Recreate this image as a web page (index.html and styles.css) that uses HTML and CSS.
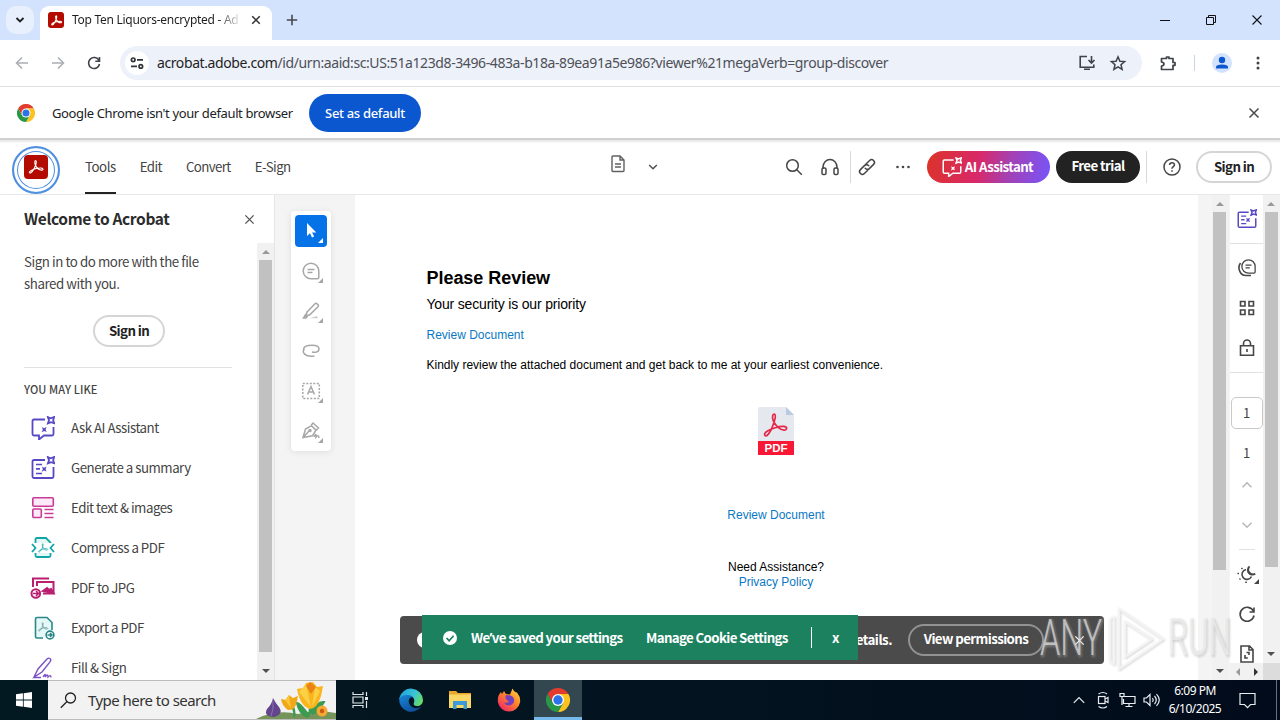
FILE: index.html
```html
<!DOCTYPE html>
<html lang="en">
<head>
<meta charset="utf-8">
<title>Top Ten Liquors-encrypted - Adobe Acrobat</title>
<link rel="stylesheet" href="styles.css">
</head>
<body>
<svg class="defs" aria-hidden="true">
  <symbol id="trefoil" viewBox="0 0 24 24"><path d="M3.500 19.800c1.800 1.200 4.800-3 6.700-7.200 1.800-4.100 2.900-8.400 1.600-9-1.600-.7-1.900 3.200-.3 6.500 1.700 3.500 5 6.100 7.900 6.100 3 0 2.600-2.900-1.300-2.900-4 0-8.600 1.200-11.900 2.900-2.900 1.500-3.600 3-2.700 3.600z" fill="none" stroke="currentColor" stroke-linejoin="round"/></symbol>
  <symbol id="x" viewBox="0 0 12 12"><path d="M1.500 1.500l9 9M10.500 1.500l-9 9" stroke="currentColor" fill="none"/></symbol>
  <symbol id="chrome" viewBox="0 0 24 24"><path fill="#e33b2e" d="M1.600 6A12 12 0 0 1 22.400 6H12L6.800 15z"/><path fill="#fcc31e" d="M22.400 6A12 12 0 0 1 12 24l5.200-9L12 6z"/><path fill="#279847" d="M12 24A12 12 0 0 1 1.600 6l5.200 9h10.400z"/><circle cx="12" cy="12" r="6" fill="#fff"/><circle cx="12" cy="12" r="4.700" fill="#2d73e8"/></symbol>
  <symbol id="spark" viewBox="0 0 8 8"><path d="M1.200 1l2.300 1L6.800 .9 5.900 3.700l1 2.800-2.900-1-2.800 1.100 1-2.800z" fill="none" stroke="currentColor" stroke-width="1.600"/></symbol>
  <symbol id="ai" viewBox="0 0 24 24"><path class="tint" d="M14 3.500H3Q1.500 3.500 1.500 5v13Q1.500 19.500 3 19.500H8v4l5-4h8q1.500 0 1.500-1.500V11" stroke="currentColor" stroke-width="1.800"/><path d="M11 11l2 1.200 2.600-1.200-1 2.500 1 2.500-2.400-.9-2.600 1.100 1.200-2.500z" fill="currentColor"/><use href="#spark" x="15.500" y="0" width="9" height="9"/></symbol>
  <symbol id="summary" viewBox="0 0 24 24"><path class="tint" d="M14 4H3Q1.500 4 1.500 5.500v15Q1.500 22 3 22H21q1.500 0 1.500-1.500V11" stroke="currentColor" stroke-width="1.800"/><path d="M5 8.500h6M5 12.800h4M5 17.500h6" stroke="currentColor" stroke-width="1.700"/><path d="M11 10.500l2 1.200 2.600-1.200-1 2.500 1 2.500-2.400-.9-2.600 1.100 1.200-2.500z" fill="currentColor"/><use href="#spark" x="15.500" y="0" width="9" height="9"/></symbol>
  <symbol id="comment" viewBox="0 0 20 20"><path d="M10 2.200a7.800 7.800 0 1 0 0 15.600h6.500q1.300 0 1.300-1.300V10A7.800 7.800 0 0 0 10 2.200zM6.500 8.500h7M6.500 11.500h5" fill="none" stroke="currentColor" stroke-width="1.500"/></symbol>
</svg>

<div class="tabstrip">
  <div class="tab-search"><svg width="12" height="8" viewBox="0 0 12 8"><path d="M2.500 2L6 5.500 9.500 2" fill="none" stroke="#202124" stroke-width="1.900"/></svg></div>
  <div class="tab">
    <span class="favicon"><svg width="13" height="13" stroke-width="2"><use href="#trefoil"/></svg></span>
    <span class="tab-title">Top Ten Liquors-encrypted - Ad</span>
    <svg class="tab-close" width="10" height="10" stroke-width="1.900"><use href="#x"/></svg>
  </div>
  <svg class="new-tab" width="12" height="12" viewBox="0 0 12 12"><path d="M6 .8v10.400M.8 6h10.400" stroke="#45494d" stroke-width="1.600"/></svg>
  <div class="window-controls">
    <svg width="12" height="12" viewBox="0 0 12 12"><path d="M1 6.500h10" stroke="#111"/></svg>
    <svg width="12" height="12" viewBox="0 0 12 12"><path d="M1.500 3.500h7v7h-7zM3.500 3V1.500h7v7H9" fill="none" stroke="#111"/></svg>
    <svg width="12" height="12" viewBox="0 0 12 12" stroke-width="1.100"><use href="#x"/></svg>
  </div>
</div>

<div class="toolbar">
  <svg class="nav dim" width="14" height="14" viewBox="0 0 14 14"><path d="M13 7H2M7 1.500L1.500 7 7 12.500"/></svg>
  <svg class="nav dim" width="14" height="14" viewBox="0 0 14 14"><path d="M1 7h11M7 1.500L12.500 7 7 12.500"/></svg>
  <svg class="nav" width="14" height="14" viewBox="0 0 14 14"><path d="M12 4.500A5.500 5.500 0 1 0 12.500 8M12.500 1v4.200H8.300"/></svg>
  <div class="omnibox">
    <span class="site-info"><svg width="14" height="14" viewBox="0 0 14 14" fill="none" stroke="#303338" stroke-width="1.700"><circle cx="3.200" cy="3.800" r="1.800"/><path d="M7 3.800h6M1 10.400h6"/><circle cx="10.800" cy="10.400" r="1.800"/></svg></span>
    <span class="url"><b>acrobat.adobe.com</b>/id/urn:aaid:sc:US:51a123d8-3496-483a-b18a-89ea91a5e986?viewer%21megaVerb=group-discover</span>
    <svg width="18" height="16" viewBox="0 0 18 16" fill="none" stroke="#3f4349" stroke-width="1.600"><path d="M9 1.500H2.200v10.700h13.600V9.500M6 14.200h6M13.500 1v6.500M10.500 5l3 3 3-3"/></svg>
    <svg width="16" height="16" viewBox="0 0 16 16" fill="none" stroke="#3f4349" stroke-width="1.500"><path d="M8 1.800l1.900 4.400 4.700.4-3.600 3.100 1.100 4.700L8 11.900l-4.100 2.500L5 9.700 1.400 6.600l4.700-.4z"/></svg>
  </div>
  <svg class="ext" width="18" height="18" viewBox="0 0 18 18"><path d="M2.500 4.500h5V3h2.500v1.500h4v4H16v2.800h-2v4.200H2.500V12q2.500-.5 2.500-2T2.500 8z" fill="none" stroke="#3f4349" stroke-width="1.700" stroke-linejoin="round"/></svg>
  <i class="sep"></i>
  <svg class="avatar" width="20" height="20" viewBox="0 0 20 20"><circle cx="10" cy="10" r="10" fill="#d3e3fd"/><circle cx="10" cy="7" r="3.200" fill="#0b57d0"/><path d="M4 15.500v-1.300Q4 11.600 10 11.600t6 2.600v1.300z" fill="#0b57d0"/></svg>
  <svg width="4" height="16" viewBox="0 0 4 16" fill="#3f4349"><circle cx="2" cy="3" r="1.500"/><circle cx="2" cy="8" r="1.500"/><circle cx="2" cy="13" r="1.500"/></svg>
</div>

<div class="infobar">
  <svg width="18" height="18"><use href="#chrome"/></svg>
  <span class="info-text">Google Chrome isn't your default browser</span>
  <span class="set-default">Set as default</span>
  <svg class="info-close" width="12" height="12" stroke-width="1.500"><use href="#x"/></svg>
</div>

<header class="app-header">
  <span class="logo"><span class="logo-tile"><svg width="18" height="18" stroke-width="1.500"><use href="#trefoil"/></svg></span></span>
  <nav class="menu"><span class="active">Tools</span><span>Edit</span><span>Convert</span><span>E-Sign</span></nav>
  <div class="doc-switch">
    <svg width="16" height="20" viewBox="0 0 16 20" fill="none" stroke="#606060" stroke-width="1.400"><path d="M3 2h7l4 4v10.500q0 1-1 1H3q-1 0-1-1V3q0-1 1-1zM10 2v4h4M5 10h6M5 13h6"/></svg>
    <svg width="10" height="10" viewBox="0 0 10 10" fill="none" stroke="#505050" stroke-width="1.500"><path d="M1.200 3L5 6.800 8.800 3"/></svg>
  </div>
  <div class="actions">
    <svg width="18" height="18" viewBox="0 0 18 18"><circle cx="7.500" cy="7.500" r="5.800"/><path d="M11.800 11.800l5 5"/></svg>
    <svg width="20" height="18" viewBox="0 0 20 18"><path d="M3 11V9a7 7.500 0 0 1 14 0v2"/><rect x="2" y="10" width="4" height="6.500" rx="1.300"/><rect x="14" y="10" width="4" height="6.500" rx="1.300"/></svg>
    <i class="sep tall"></i>
    <svg width="18" height="18" viewBox="0 0 18 18"><g transform="rotate(-45 9 9)"><path d="M8 11.800H2.500a2.800 2.800 0 0 1 0-5.600h6A2.800 2.800 0 0 1 11 10M10 6.200h5.500a2.800 2.800 0 0 1 0 5.600h-6A2.800 2.800 0 0 1 7 8"/></g></svg>
    <svg class="dots" width="16" height="4" viewBox="0 0 16 4"><circle cx="2.500" cy="2" r="1.300"/><circle cx="8" cy="2" r="1.300"/><circle cx="13.500" cy="2" r="1.300"/></svg>
    <span class="pill ai"><svg class="icon" width="20" height="20"><use href="#ai"/></svg>AI Assistant</span>
    <span class="pill dark">Free trial</span>
    <i class="sep tall"></i>
    <svg width="20" height="20" viewBox="0 0 20 20"><circle cx="10" cy="10" r="8"/><path d="M7.500 8q.2-2.300 2.500-2.300T12.500 7.800c0 1.800-2.500 1.900-2.500 4M10 13.300v1.500"/></svg>
    <span class="pill outline">Sign in</span>
  </div>
</header>

<main class="main">
  <aside class="panel">
    <div class="panel-head"><h1>Welcome to Acrobat</h1><svg width="11" height="11" stroke-width="1.500"><use href="#x"/></svg></div>
    <div class="panel-body">
      <div class="panel-content">
        <p>Sign in to do more with the file shared with you.</p>
        <span class="pill outline panel-sign">Sign in</span>
        <hr>
        <h2>YOU MAY LIKE</h2>
        <ul>
          <li><svg class="icon violet inset" width="24" height="24"><use href="#ai"/></svg>Ask AI Assistant</li>
          <li><svg class="icon violet inset" width="24" height="24"><use href="#summary"/></svg>Generate a summary</li>
          <li><svg width="26" height="26" viewBox="0 0 26 26" fill="#fdeaf8" stroke="#c93b97" stroke-width="1.600"><rect x="2.800" y="2.800" width="20.500" height="8.400" rx="1"/><rect x="2.800" y="14" width="8.500" height="8.500" rx="1"/><path d="M14.500 14.500H23.500M14.500 18.500H23.500M14.500 22.500H23.500"/></svg>Edit text &amp; images</li>
          <li><svg class="teal" width="26" height="26" viewBox="0 0 26 26" fill="#e4f8f8" stroke="#11a6a6" stroke-width="1.800"><path d="M5.500 8V4.500q0-1.500 1.500-1.500h9l4.500 4.500V8M5.500 18v2.500Q5.500 22 7 22h12q1.500 0 1.500-1.500V18"/><path d="M2 9l3.500 4L2 17M24 9l-3.500 4 3.500 4" fill="none"/><use href="#trefoil" x="7" y="7" width="12" height="12"/></svg>Compress a PDF</li>
          <li><svg width="26" height="26" viewBox="0 0 26 26" fill="none" stroke="#b91e71" stroke-width="2"><path d="M3 12V3.500h16M7 11V7h16.500v11.500H13"/><path d="M13 16l4-3 2 2 2-1 2.500 4z" fill="#b91e71"/><circle cx="5.800" cy="18.500" r="4.300" fill="#fff"/><path d="M3 18.500h5M6 16l2.500 2.500L6 21" stroke-width="1.600"/></svg>PDF to JPG</li>
          <li><svg class="slate" width="26" height="26" viewBox="0 0 26 26" fill="#e4f8f8" stroke="#2b8889" stroke-width="1.600"><path d="M13 23H7q-1.500 0-1.500-1.500V4Q5.500 2.500 7 2.500h10l5 5V15"/><use href="#trefoil" x="7" y="6" width="12" height="12"/><circle cx="20" cy="20" r="3.900" fill="#fff"/><path d="M17.500 20h4.500M20 18l2 2-2 2"/></svg>Export a PDF</li>
          <li><svg width="26" height="26" viewBox="0 0 26 26" fill="none" stroke="#7a52c7" stroke-width="1.400"><path d="M4 22L8 14 17 4q1.500-1.500 3-.5t0 3.400L12 17l-8 5zM4 22.500h7M13 22q3-5 2 0 3-4 3 0 3-3 3 .5"/></svg>Fill &amp; Sign</li>
        </ul>
      </div>
      <div class="scrollbar panel-sb"><i class="up"></i><b></b><i class="down"></i></div>
    </div>
  </aside>

  <section class="canvas">
    <div class="tools">
      <span class="tool on"><svg width="20" height="20" viewBox="0 0 20 20"><path d="M6 2v13l3-2.700 2 4.200 2.100-1-2-4.100h4.200z" fill="#fff"/></svg></span>
      <span class="tool"><svg width="20" height="20"><use href="#comment"/></svg></span>
      <span class="tool"><svg width="20" height="20" viewBox="0 0 20 20"><path d="M6 11L14 2.800q1-.9 2 0l1 1q1 1 0 2L8.500 14 5 15zM5 13l-2.500 4H5l1.500-2"/><path d="M9 17.200h8L16 15z" fill="#ccc" stroke="none"/></svg></span>
      <span class="tool plain"><svg width="20" height="20" viewBox="0 0 20 20"><path d="M3 9.500C1.500 5.500 6 4.200 11 4.200s7.500 1.500 7 4.300-4.500 3.300-7 2.500M3.500 7.500C.5 11 3.500 16.500 13.500 15"/></svg></span>
      <span class="tool"><svg width="20" height="20" viewBox="0 0 20 20"><rect x="1.800" y="2.500" width="16.500" height="15" stroke-dasharray="2 1.500"/><path d="M6.500 13.500L10 5.500l3.500 8M7.800 11h4.500"/></svg></span>
      <span class="tool"><svg width="20" height="20" viewBox="0 0 20 20"><path d="M2 16.500L4.500 8l6-3.300 4.500 4.500-3.500 5.500zM2.500 16l5.500-6M10 4.500L12 2l5.500 5-2.300 2.300M13 16q2.500-5 2 0 2.500-3 3 1"/><circle cx="9" cy="9.500" r="1"/></svg></span>
    </div>
    <article class="page">
      <h3>Please Review</h3>
      <p class="lead">Your security is our priority</p>
      <p class="link first">Review Document</p>
      <p class="body">Kindly review the attached document and get back to me at your earliest convenience.</p>
      <div class="centered">
        <div class="pdf-file">
          <svg width="36" height="34" viewBox="0 0 36 34"><path d="M0 1.500Q0 0 1.500 0H28l8 8v26H0z" fill="#e5e9ef"/><path d="M28 0l8 8h-8z" fill="#b9cbe2"/><g color="#e52748" fill="none" stroke="currentColor" stroke-width="1.700"><path d="M7 28.500c2 1.500 5.500-3.500 7.500-9s4-10.500 2.500-12-3.800 1.700-1.600 6.700 7.600 9 10.600 9 4.100-3.300-.4-3.800S13 22 9.500 24 6.300 27.800 7 28.500z"/></g></svg>
          <span>PDF</span>
        </div>
        <p class="link">Review Document</p>
        <p class="need">Need Assistance?</p>
        <p class="link">Privacy Policy</p>
      </div>
    </article>
    <div class="scrollbar doc-sb"><i class="up"></i><b></b><i class="down"></i></div>
  </section>

  <div class="rail-wrap">
    <aside class="rail">
      <svg class="icon violet" width="20" height="20"><use href="#summary"/></svg>
      <hr>
      <svg width="20" height="20" viewBox="0 0 20 20"><g transform="translate(3 0) scale(.85)"><use href="#comment" width="20" height="20"/></g><path d="M3.500 5C0 10 3 17.500 9 17.500h5"/></svg>
      <svg width="20" height="20" viewBox="0 0 20 20"><path d="M3.500 3.500h4.500v4.500h-4.500zM12 3.500h4.500v4.500H12zM3.500 12h4.500v4.500h-4.500zM12 12h4.500v4.500H12z"/></svg>
      <svg class="lock" width="20" height="20" viewBox="0 0 20 20"><path d="M3.500 7.700h13v9.500h-13zM6.500 7.500V5.500a3.500 3.500 0 0 1 7 0v2M10 11v3"/></svg>
      <hr>
      <span class="page-box">1</span>
      <span class="page-total">1</span>
      <svg class="faint" width="12" height="12" viewBox="0 0 12 12"><path d="M1.500 8.200L6 3.800l4.500 4.400"/></svg>
      <svg class="faint" width="12" height="12" viewBox="0 0 12 12"><path d="M1.500 3.800L6 8.200l4.500-4.400"/></svg>
      <hr class="short">
      <svg width="20" height="20" viewBox="0 0 20 20"><path d="M9 5.500a5 5 0 1 0 5.500 7M12.500 2.500c-3 4 .5 9 5.700 7.300A4.500 4.500 0 0 1 12.500 2.500z"/><path d="M4.500 4l.9 1M.5 9.500h1.500M2.500 15.500l1-.9M9 19v-1.500"/><path d="M22 15v5h-5z" fill="#464646" stroke="none"/></svg>
      <svg width="20" height="20" viewBox="0 0 20 20"><path d="M16.300 7A7 7 0 1 0 17 11.500M17 3.500v4.500h-4.500"/></svg>
      <svg width="20" height="20" viewBox="0 0 20 20"><path d="M4 2h8.500L16 5.500V18H4zM12 2v4h4M9.500 8.500H12V11M8 11v3h2.800"/></svg>
    </aside>
    <div class="hscroll"><i></i><i></i></div>
  </div>
  <div class="outer-sb"><div class="scrollbar"><i class="up"></i><b></b><i class="down"></i></div></div>

  <div class="notice">
    <span class="ball"></span>
    <span class="notice-text">etails.</span>
    <span class="pill view">View permissions</span>
    <svg width="11" height="11" stroke-width="1.400"><use href="#x"/></svg>
  </div>
  <div class="cookie">
    <svg width="14" height="14" viewBox="0 0 14 14"><circle cx="7" cy="7" r="7" fill="#fff"/><path d="M3.500 7l2.600 2.700 4.500-5" fill="none" stroke="#1c815f" stroke-width="1.700"/></svg>
    <span class="saved">We<span class="apos">’</span>ve saved your settings</span>
    <span class="manage">Manage Cookie Settings</span>
    <i></i>
    <span class="dismiss">x</span>
  </div>
  <svg class="watermark" width="200" height="70" viewBox="0 0 200 70">
    <g class="wm-shadow"><text x="3" y="49" textLength="62" lengthAdjust="spacingAndGlyphs">ANY</text><text x="131" y="49" textLength="63" lengthAdjust="spacingAndGlyphs">RUN</text><path d="M73 13v42l4 3V11z M82 3v60l44-30z M88 16v35l27-18z"/></g>
    <g class="wm-face"><text x="2" y="48" textLength="62" lengthAdjust="spacingAndGlyphs">ANY</text><text x="130" y="48" textLength="63" lengthAdjust="spacingAndGlyphs">RUN</text><path d="M72 12v42l4 3V10z M81 2v60l44-30z M87 15v35l27-18z"/></g>
  </svg>
</main>

<footer class="taskbar">
  <div class="start"><svg width="16" height="16" viewBox="0 0 16 16" fill="#fff"><path d="M0 2.300L6.900 1.300V7.600H0zM7.700 1.200L16 0v7.600H7.700zM0 8.400h6.900v6.300L0 13.700zM7.700 8.400H16V16l-8.300-1.200z"/></svg></div>
  <div class="search">
    <svg width="17" height="17" viewBox="0 0 17 17" fill="none" stroke="#222" stroke-width="1.300"><circle cx="10.500" cy="6" r="5"/><path d="M7 9.500L.8 15.800"/></svg>
    <span>Type here to search</span>
    <svg class="flowers" width="80" height="38" viewBox="0 0 80 38">
      <path d="M0 38Q20 28 42 33q18-5 38-1v6z" fill="#74945a"/>
      <path d="M54 14q4 12-2 22M35 22q5 8 3 14M54 30q9-10 14-9-5 9-12 12M52 33q-9-12-11-11 2 10 10 14" fill="#3a9b51" stroke="#3a9b51" stroke-width="2"/>
      <path d="M17 17q3 6 6 9 5 7-5 10-11-1-7-8 5-5 6-11z" fill="#63458d"/><path d="M17 20q1 8-2 15" stroke="#8e70b2" fill="none"/>
      <path d="M25 18l5 1 3-5 4 3 5-2-1 5q-2 10-9 9-6-4-7-11z" fill="#f0a818"/><path d="M33 14l2 13-6-8z" fill="#fbc73a"/>
      <path d="M41 8l6-1 3-5 7-1 4 5 6-1-2 10q-4 13-11 13-10-3-13-20z" fill="#f8b51d"/><path d="M50 3l5 23-12-15zM59 6l5 4-8 16z" fill="#fbd045"/><path d="M50 5l4-4 6 5-5 7z" fill="#e98217"/>
      <circle cx="66" cy="30" r="5.500" fill="#f7a832"/><circle cx="66" cy="30" r="2.200" fill="#c75b13"/>
    </svg>
  </div>
  <div class="app"><svg width="18" height="18" viewBox="0 0 18 18" fill="none" stroke="#dfe5e8" stroke-width="1.200"><path d="M2 1v2.500h10V1M2 17v-2.500h10V17M2 6h10v6H2zM15.500 1v4M15.500 10v7"/><path d="M14 7.500h3" stroke-width="3"/></svg></div>
  <div class="app edge"><svg width="24" height="24" viewBox="0 0 24 24"><defs><linearGradient id="eg" x1="0" x2="1" y1=".2" y2=".6"><stop stop-color="#1aa2dc"/><stop offset=".6" stop-color="#3cc4d6"/><stop offset="1" stop-color="#68dc63"/></linearGradient><linearGradient id="eb" x2=".6" y2="1"><stop stop-color="#1786d6"/><stop offset="1" stop-color="#0f4f9c"/></linearGradient></defs><path d="M.3 10A12 12 0 0 1 24 12c0 4-3 6-6 6s-4-1.500-3-3.500S15 8 10 8 1 9.500.3 12z" fill="url(#eg)"/><path d="M.2 11C2 6.500 11 6 14 9c-5 0-5 5-3 8 3 4 8 4 11.300 1.200A12 12 0 0 1 .2 11z" fill="url(#eb)"/></svg></div>
  <div class="app"><svg width="22" height="20" viewBox="0 0 22 20"><path d="M0 1h7l2 2h13v15H0z" fill="#e9a82c"/><path d="M0 4.500h22V18H0z" fill="#fbd766"/><path d="M4 11h14v8h-3.500v-4h-7v4H4z" fill="#3d9bd8"/></svg></div>
  <div class="app"><svg width="24" height="24" viewBox="0 0 24 24"><defs><linearGradient id="ff" x1="1" y1="0" x2=".2" y2="1"><stop stop-color="#ffe34a"/><stop offset=".45" stop-color="#ff8a28"/><stop offset="1" stop-color="#f02468"/></linearGradient></defs><path d="M4 4l1 2 2-3 2 3 4 .5L15.500.5q2 4 4.500 4 4 5 3 10a11.200 11.200 0 0 1-22 0Q0 8 4 4z" fill="url(#ff)"/><path d="M9 7q7 0 8 4t-3 6q-5 1.500-7-2.500 3 1 5-1-5-2-3-6.500z" fill="#7340bd"/></svg></div>
  <div class="app current"><svg width="24" height="24"><use href="#chrome"/></svg></div>
  <div class="tray">
    <svg width="12" height="8" viewBox="0 0 12 8"><path d="M.8 6.800L6 1.500l5.200 5.300"/></svg>
    <svg width="12" height="18" viewBox="0 0 12 18"><rect x="1.500" y="5.500" width="6.500" height="7"/><path d="M8 8l3-1.500v5L8 10M1.500 3Q6 0 10 3M1.500 15.500q4.500 3 8.500 0"/></svg>
    <svg width="17" height="16" viewBox="0 0 17 16"><path d="M5 4.500h11v7H4.500V7M10 11.500v3M6.500 14.500h7M1 1.500h4v3H1zM3 4.500v8.500"/></svg>
    <svg width="17" height="16" viewBox="0 0 17 16"><path d="M1 6h2.500L7 2.500v11L3.500 10H1zM9.500 6q1.500 2 0 4M11.500 4q3.500 4 0 8M13.500 2.200q5.500 5.800 0 11.600"/></svg>
    <div class="clock"><span>6:09 PM</span><span>6/10/2025</span></div>
    <svg width="17" height="17" viewBox="0 0 17 17"><path d="M1 1.500h15v11h-4.500L8.500 15.700 5.500 12.500H1z"/></svg>
    <i></i>
  </div>
</footer>
</body>
</html>
```
FILE: styles.css
```css
* { box-sizing: border-box; }
html, body, h1, h2, h3, p, ul { margin: 0; padding: 0; }
body {
  width: 1280px; height: 720px; overflow: hidden;
  display: flex; flex-direction: column;
  background: #fff; color: #2c2c2c; white-space: nowrap;
  font-family: "Noto Sans CJK SC", "Noto Sans", sans-serif;
}
svg { flex: none; display: block; overflow: visible; }
.defs { position: absolute; width: 0; height: 0; }

.tabstrip, .toolbar, .infobar { font-family: "Noto Sans", sans-serif; }
.tabstrip { height: 40px; flex: none; display: flex; align-items: center; background: #d3e3fd; padding-left: 6px; }
.tab-search { width: 28px; height: 28px; border-radius: 10px; background: #e9f0fd; display: grid; place-items: center; }
.tab { align-self: flex-end; width: 232px; height: 34px; margin-left: 6px; padding: 0 10px 6px 8px; background: #fff; border-radius: 9px 9px 0 0; display: flex; align-items: center; }
.favicon { width: 16px; height: 16px; border-radius: 3px; background: #b30b00; color: #fff; display: grid; place-items: center; flex: none; }
.tab-title { flex: none; width: 168px; margin-left: 8px; overflow: hidden; font-size: 12px; line-height: 18px; letter-spacing: -.28px; color: #1f1f1f; -webkit-mask-image: linear-gradient(90deg, #000 145px, transparent 170px); mask-image: linear-gradient(90deg, #000 145px, transparent 170px); }
.tab-close { margin-left: 11px; color: #303236; }
.new-tab { margin-left: 14px; }
.window-controls { margin-left: auto; display: flex; gap: 34px; padding-right: 17px; color: #111; }

.toolbar { height: 47px; flex: none; display: flex; align-items: center; padding: 0 20px 1px 15px; border-bottom: 1px solid #dfe1e5; background: #fff; }
.nav { margin-right: 22px; fill: none; stroke: #3f4349; stroke-width: 1.600px; }
.nav.dim { stroke: #acafb4; }
.omnibox { width: 1022px; height: 34px; margin-left: -3px; border-radius: 17px; background: #edf1fa; display: flex; align-items: center; padding: 0 16px 0 5px; gap: 14px; }
.site-info { width: 24px; height: 24px; border-radius: 12px; background: #fff; display: grid; place-items: center; }
.url { flex: 1; margin-left: -6px; font-size: 14px; letter-spacing: -.402px; color: #4d5056; }
.url b { font-weight: 400; color: #1f1f1f; }
.ext { margin-left: 17px; }
.sep { width: 1px; height: 16px; background: #c9d3e6; margin: 0 17px; }
.toolbar > svg:last-child { margin-left: auto; }

.infobar { height: 53px; flex: none; display: flex; align-items: center; padding: 0 20px 0 17px; background: #fff; border-bottom: 2px solid #d0d0d0; }
.info-text { margin-left: 17px; width: 257px; font-size: 13px; letter-spacing: -.37px; color: #202124; }
.set-default { width: 112px; height: 38px; border-radius: 19px; background: #0b57d0; color: #fff; font-size: 13px; font-weight: 500; letter-spacing: -.32px; display: grid; place-items: center; }
.info-close { margin-left: auto; color: #4a4a4a; }

.app-header { height: 55px; flex: none; display: flex; align-items: center; position: relative; border-bottom: 1px solid #e8e8e8; padding: 0 8px 0 12px; box-shadow: inset 0 3px 2px -1px #e8e8e8; }
.logo { width: 48px; height: 48px; margin-top: 5px; border-radius: 50%; border: 2px solid #4f8fe0; box-shadow: inset 0 0 0 3px #fff, inset 0 0 0 4px #4f8fe0; display: grid; place-items: center; }
.logo-tile { width: 24px; height: 24px; margin-top: -6px; border-radius: 4px; background: #b30b00; color: #fff; display: grid; place-items: center; }
.menu { display: flex; gap: 24px; margin-left: 25px; height: 54px; font-size: 13.300px; line-height: 54px; letter-spacing: -.6px; color: #444; }
.menu span { height: 54px; }
.menu .active { border-bottom: 2px solid #222; letter-spacing: -.48px; }
.doc-switch { position: absolute; left: 610px; top: 14px; display: flex; align-items: center; gap: 22px; }
.doc-switch svg + svg { margin-top: 6px; }
.actions { margin-left: auto; display: flex; align-items: center; color: #333; }
.actions > svg { fill: none; stroke: #464646; stroke-width: 1.500px; margin-right: 17px; }
.actions > svg:nth-child(2) { margin-right: 10px; }
.actions > svg:nth-child(4) { margin-left: 7px; margin-right: 19px; }
.actions > .dots { fill: #464646; stroke: none; margin-right: 16px; }
.sep.tall { height: 32px; margin: 0; background: #d9d9d9; }
.pill { height: 32px; border-radius: 16px; font-size: 13.300px; line-height: 28px; font-weight: 700; letter-spacing: -.6px; display: flex; align-items: center; justify-content: center; }
.pill.ai { width: 123px; gap: 3px; padding: 0 2px 1px 0; color: #fff; background: linear-gradient(100deg, #dc3328 0%, #d82969 42%, #a142b8 68%, #7655fa 100%); margin-right: 6px; }
.pill.dark { width: 84px; padding-bottom: 3px; margin-right: 6px; color: #fff; background: #222; }
.actions > svg:nth-child(9) { margin: 0 14px 0 15px; }
.pill.outline { width: 76px; border: 2px solid #d5d5d5; color: #222; }
.icon, .tint { fill: none; }
.violet { color: #5749c4; fill: #eeedff; }
.violet .tint { fill: #eeedff; }

.main { position: relative; flex: 1; display: flex; min-height: 0; }
.panel { width: 275px; border-right: 1px solid #e6e6e6; background: #fff; display: flex; flex-direction: column; }
.panel-head { height: 48px; flex: none; display: flex; align-items: center; justify-content: space-between; padding: 0 19px 0 24px; color: #555; }
.panel-head h1 { font-size: 15.500px; line-height: 24px; letter-spacing: -.36px; color: #2c2c2c; margin-top: -2px; }
.panel-body { flex: 1; min-height: 0; display: flex; justify-content: space-between; }
.panel-content { width: 232px; padding: 8px 0 0 24px; overflow: hidden; color: #444; }
.panel-content p { font-size: 13.300px; line-height: 22px; letter-spacing: -.44px; white-space: normal; width: 190px; }
.pill.panel-sign { width: 72px; margin: 20px 0 20px 69px; padding-bottom: 1px; }
hr { width: 100%; height: 1px; flex: none; margin: 0; border: 0; background: #e1e1e1; }
.panel-content h2 { margin-top: 12px; font-size: 11px; line-height: 18px; font-weight: 500; letter-spacing: .08px; }
.panel-content ul { margin-top: 10px; list-style: none; }
.panel-content li { height: 40px; display: flex; align-items: center; padding-left: 6px; gap: 15px; font-size: 13.300px; letter-spacing: -.5px; line-height: 20px; }
.inset { margin: 0 1px; }
.teal { color: #37b6b5; } .slate { color: #78a4aa; }
.teal use, .slate use { fill: none; stroke-width: 2px; }

.scrollbar { width: 17px; height: 100%; background: #f1f1f1; display: flex; flex-direction: column; align-items: center; }
.scrollbar i { width: 0; height: 0; border: 4px solid transparent; flex: none; }
.scrollbar .up { border-bottom-color: #999; border-top: 0; margin: 7px 0 6px; }
.scrollbar .down { border-top-color: #505050; border-bottom: 0; margin: auto 0 7px; }
.scrollbar b { width: 13px; background: #c1c1c1; }
.panel-sb b { height: 392px; }

.canvas { width: 955px; background: #f4f4f4; display: flex; }
.tools { width: 40px; height: 240px; margin: 16px 24px 0 16px; padding: 4px; flex: none; display: flex; flex-direction: column; gap: 8px; background: #fff; border-radius: 4px; box-shadow: 0 1px 6px #ddd; color: #a7a7a7; }
.tool { position: relative; width: 32px; height: 32px; border-radius: 4px; display: grid; place-items: center; }
.tool svg { fill: none; stroke: #a7a7a7; stroke-width: 1.500px; }
.tool.on { background: #0672e8; color: #fff; }
.tool.on svg { stroke: none; }
.tool::after { content: ""; position: absolute; right: 4px; bottom: 4px; border-left: 5px solid transparent; border-bottom: 5px solid currentColor; }
.tool.plain::after { display: none; }
.page { width: 843px; background: #fff; padding: 72px 72.500px 0 71.500px; font-family: "Liberation Sans", Arial, sans-serif; font-size: 12px; line-height: 15px; color: #000; }
.page h3 { font-size: 18px; line-height: 22px; letter-spacing: -.04px; }
.page .lead { font-size: 14px; line-height: 18px; margin-top: 6px; letter-spacing: -.18px; }
.page .link { color: #0b78c4; }
.page .first { margin-top: 15px; }
.page .body { margin-top: 15px; letter-spacing: -.012px; }
.centered { display: flex; flex-direction: column; align-items: center; margin-top: 34px; }
.pdf-file { width: 36px; height: 48px; margin-bottom: 53px; }
.pdf-file span { height: 14px; display: grid; place-items: center; background: #f81836; color: #fff; font-size: 11.500px; font-weight: 700; }
.need { margin-top: 37px; }
.doc-sb { margin-left: 14px; padding-right: 2px; }
.doc-sb b { height: 358px; }

.rail-wrap { width: 33px; display: flex; flex-direction: column; }
.rail { flex: 1; min-height: 0; overflow: hidden; display: flex; flex-direction: column; align-items: center; background: #fff; padding-top: 14px; }
.rail svg { fill: none; stroke: #464646; stroke-width: 1.600px; color: #464646; margin-bottom: 20px; }
.rail .violet { margin-bottom: 14px; color: #5749c4; stroke: none; }
.rail hr + svg { margin-top: 14px; }
.rail .lock { margin-bottom: 14px; }
.page-box { width: 32px; height: 32px; flex: none; margin-top: 24px; border: 1px solid #c9c9c9; border-radius: 5px; font-size: 13px; line-height: 30px; text-align: center; color: #444; }
.page-total { height: 48px; flex: none; font-size: 13px; line-height: 48px; color: #444; }
.rail .faint { stroke: #b8b8b8; margin: 2px 0 28px; }
.rail .faint + .faint { margin: 0 0 18px; }
.rail .short { width: 16px; }
.hscroll { height: 17px; flex: none; background: #f1f1f1; display: flex; justify-content: space-between; align-items: center; padding: 0 5px 0 6px; }
.hscroll i { border: 4px solid transparent; border-right-color: #999; border-left: 0; }
.hscroll i + i { border-right: 0; border-left: 4px solid #333; }
.outer-sb { width: 17px; background: #dcdcdc; padding-bottom: 17px; }
.outer-sb .scrollbar { padding-right: 1px; }
.outer-sb b { height: 355px; }

.notice { position: absolute; left: 400px; top: 421px; width: 704px; height: 48px; border-radius: 4px; background: #4b4b4b; color: #fff; display: flex; align-items: center; padding: 0 19px 0 17px; font-size: 13.300px; font-weight: 700; letter-spacing: -.5px; }
.ball { width: 16px; height: 16px; border-radius: 50%; background: #fff; flex: none; }
.notice-text { flex: 1; text-align: right; padding: 0 16px 2px 0; }
.view { width: 136px; border: 2px solid #929292; margin-right: 30px; padding-bottom: 2px; }
.cookie { position: absolute; left: 422px; top: 420px; width: 436px; height: 45px; background: #1c815f; color: #fff; display: flex; align-items: center; padding-left: 21px; font-size: 13.300px; font-weight: 700; letter-spacing: -.65px; }
.cookie > span { margin-top: -1px; }
.cookie .saved { margin-left: 14px; width: 175px; letter-spacing: -.65px; }
.apos { font-family: "Noto Sans", sans-serif; line-height: 1; }
.cookie .manage { width: 165px; }
.cookie i { width: 1px; height: 21px; background: #fff; margin-right: 20px; }
.watermark { position: absolute; left: 1038px; top: 412px; font-family: Roboto, sans-serif; font-size: 50px; font-weight: 300; }
.wm-shadow { fill: none; stroke: #a8a8a8; stroke-width: 1.600px; opacity: .65; filter: blur(1px); }
.wm-face text { fill: rgba(240, 240, 240, .65); }
.wm-face path { fill: none; stroke: rgba(244, 244, 244, .85); stroke-width: 2.500px; }

.taskbar { height: 40px; flex: none; display: flex; background: linear-gradient(90deg, #031921, #031420 50%, #020b1b); color: #fff; font-family: "Noto Sans", sans-serif; }
.start { width: 48px; display: grid; place-items: center; }
.search { position: relative; width: 288px; background: #f2f2f2; border: 1px solid #bbb; border-width: 1px 0; display: flex; align-items: center; padding-left: 12px; gap: 11px; font-size: 15px; letter-spacing: -.54px; color: #333; }
.flowers { position: absolute; right: 0; bottom: 0; }
.app { width: 48px; margin-left: 1px; display: grid; place-items: center; }
.search + .app { margin-left: 0; }
.app.edge { margin-left: 3px; }
.current { background: #334750; border-bottom: 3px solid #76b9ed; padding-top: 3px; }
.tray { margin-left: auto; display: flex; align-items: center; }
.tray svg { fill: none; stroke: #e9edf2; stroke-width: 1.200px; margin-right: 7px; }
.tray svg:nth-child(1) { margin-right: 12px; }
.tray svg:nth-child(2) { margin-right: 10px; }
.clock { width: 64px; margin: 0 12px 0 -4px; display: flex; flex-direction: column; align-items: center; font-size: 12px; line-height: 18px; letter-spacing: -.5px; }
.tray > svg:nth-child(6) { margin-right: 20px; }
.tray i { width: 1px; height: 40px; margin-right: 3px; background: #66717c; }
```
